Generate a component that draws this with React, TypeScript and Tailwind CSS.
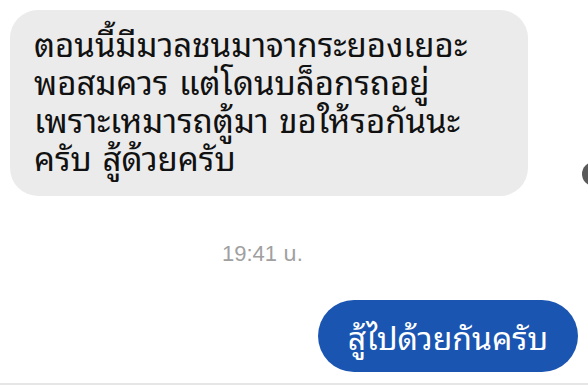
import React from "react";

export default function App() {
  return (
    <div
      className="w-[588px] h-[392px] bg-white overflow-hidden relative flex flex-col"
      style={{ fontFamily: '"Noto Sans Thai Looped", "Noto Sans Thai", "Noto Sans", "Liberation Sans", sans-serif' }}
    >
      <div className="pl-[10px] pt-[10px]">
        <div className="w-[518px] h-[186px] bg-[#ebebeb] rounded-[28px] pl-[24px] pt-[14px] text-[33px] leading-[38px] [word-spacing:2px] text-[#111111]">
          <div className="whitespace-nowrap">ตอนนี้มีมวลชนมาจากระยองเยอะ</div>
          <div className="whitespace-nowrap">พอสมควร แต่โดนบล็อกรถอยู่</div>
          <div className="whitespace-nowrap">เพราะเหมารถตู้มา ขอให้รอกันนะ</div>
          <div className="whitespace-nowrap">ครับ สู้ด้วยครับ</div>
        </div>
      </div>
      <div className="absolute left-[582px] top-[162px] w-[24px] h-[24px] rounded-full bg-[#5a5a5a]" />
      <div className="mt-[45px] pl-[222px] text-[22px] leading-[26px] text-[#a0a0a0]" style={{ fontFamily: '"Liberation Sans", "Noto Sans Thai", sans-serif' }}>
        19:41 น.
      </div>
      <div className="mt-[33px] flex justify-end pr-[10px]">
        <div className="h-[72px] w-[260px] rounded-full bg-[#1a55b2] text-white text-[32px] flex items-center justify-center whitespace-nowrap">
          สู้ไปด้วยกันครับ
        </div>
      </div>
      <div className="mt-[11px] h-[2px] bg-[#e6e6e6]" />
    </div>
  );
}
